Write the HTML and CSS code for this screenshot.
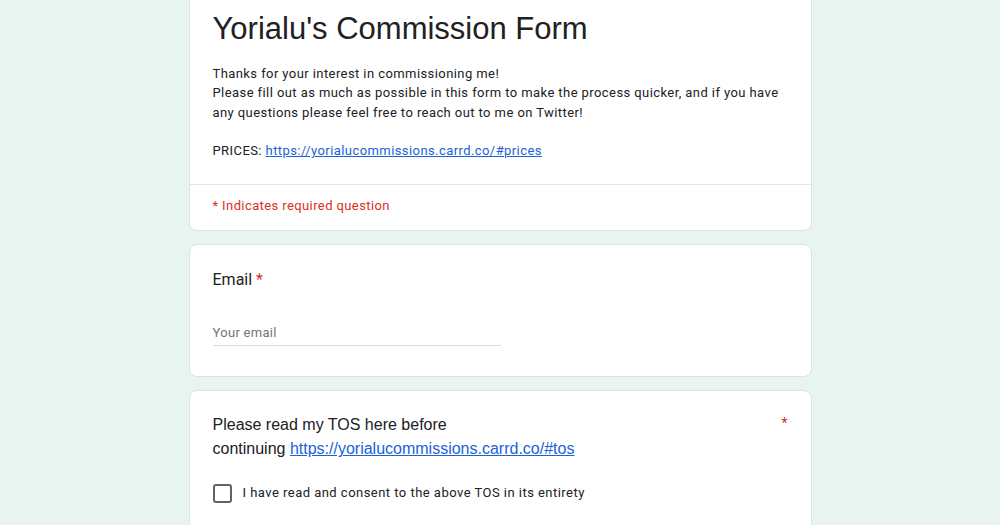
FILE: index.html
```html
<!DOCTYPE html>
<html>
<head>
<meta charset="utf-8">
<link rel="stylesheet" href="styles.css">
</head>
<body>
<main class="form">
  <section class="card header-card">
    <div class="header-main">
      <h1 class="title">Yorialu's Commission Form</h1>
      <div class="desc">
        <div>Thanks for your interest in commissioning me!</div>
        <div>Please fill out as much as possible in this form to make the process quicker, and if you have any questions please feel free to reach out to me on Twitter!</div>
        <div class="blank">&nbsp;</div>
        <div>PRICES: <a class="link" href="#">https://yorialucommissions.carrd.co/#prices</a></div>
      </div>
    </div>
    <div class="header-foot">* Indicates required question</div>
  </section>

  <section class="card question">
    <div class="q-title roboto">Email <span class="req">*</span></div>
    <div class="input-wrap">
      <div class="placeholder">Your email</div>
    </div>
  </section>

  <section class="card question tos">
    <div class="q-row">
      <div class="q-title arial">Please read my TOS here before<br>continuing <a class="link" href="#">https://yorialucommissions.carrd.co/#tos</a></div>
      <span class="req req-side">*</span>
    </div>
    <label class="check-row">
      <span class="checkbox"></span>
      <span class="check-label">I have read and consent to the above TOS in its entirety</span>
    </label>
  </section>
</main>
</body>
</html>
```

FILE: styles.css
```css
html, body {
  margin: 0;
  padding: 0;
}
body {
  background: #e7f4f0;
  font-family: Roboto, "Liberation Sans", sans-serif;
  color: #202124;
  height: 525px;
  overflow: hidden;
}
.form {
  width: 623px;
  margin: -16px auto 0;
  display: flex;
  flex-direction: column;
  gap: 13px;
}
.card {
  background: #fff;
  border: 1px solid #dde3e1;
  border-radius: 8px;
}
.header-main {
  padding: 24px 23px 24px;
  border-bottom: 1px solid #e3e5e6;
}
.title {
  margin: 0;
  font-family: "Liberation Sans", Arial, sans-serif;
  font-weight: 400;
  font-size: 31px;
  line-height: 40px;
  color: #202124;
}
.desc {
  margin-top: 15px;
  font-size: 13px;
  line-height: 19.3px;
  letter-spacing: 0.42px;
  color: #202124;
}
.link {
  color: #1a62d6;
  text-decoration: underline;
}
.header-foot {
  padding: 11px 23px 14px;
  font-size: 13px;
  line-height: 20px;
  letter-spacing: 0.4px;
  color: #d93025;
}
.question {
  padding: 23px 23px 30px;
}
.question.tos {
  padding-top: 22px;
}
.q-title {
  font-size: 16px;
  line-height: 24px;
  color: #202124;
}
.q-title.arial {
  font-family: "Liberation Sans", Arial, sans-serif;
  font-size: 16px;
}
.req {
  color: #d93025;
}
.q-row {
  display: flex;
  justify-content: space-between;
  align-items: flex-start;
}
.req-side {
  font-size: 14px;
  line-height: 20px;
}
.input-wrap {
  margin-top: 31px;
  width: 288px;
  border-bottom: 1px solid #dadce0;
  padding-bottom: 2px;
}
.placeholder {
  font-size: 13px;
  line-height: 20px;
  letter-spacing: 0.3px;
  color: #70757a;
}
.check-row {
  margin-top: 22px;
  display: flex;
  align-items: center;
  gap: 11px;
}
.checkbox {
  width: 15px;
  height: 15px;
  border: 2px solid #5f6368;
  border-radius: 3px;
  flex: none;
}
.check-label {
  font-size: 13px;
  line-height: 20px;
  letter-spacing: 0.47px;
  color: #202124;
}
```
